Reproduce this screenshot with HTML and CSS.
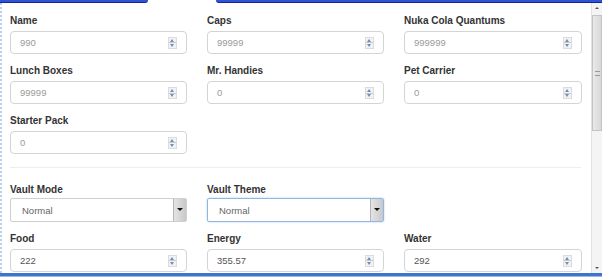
FILE: index.html
```html
<!DOCTYPE html>
<html lang="en">
<head>
  <meta charset="UTF-8">
  <title>Vault Editor</title>
  <link rel="stylesheet" href="styles.css">
</head>
<body>
  <div class="window">
    <div class="top-edge">
      <div class="tab-edge tab-left"></div>
      <div class="tab-gap"></div>
      <div class="tab-edge tab-right"></div>
    </div>

    <div class="panel">
      <div class="content">
        <div class="field-grid">
          <div class="field">
            <label>Name</label>
            <div class="num-input"><span>990</span><i class="spin"></i></div>
          </div>
          <div class="field">
            <label>Caps</label>
            <div class="num-input"><span>99999</span><i class="spin"></i></div>
          </div>
          <div class="field">
            <label>Nuka Cola Quantums</label>
            <div class="num-input"><span>999999</span><i class="spin"></i></div>
          </div>

          <div class="field">
            <label>Lunch Boxes</label>
            <div class="num-input"><span>99999</span><i class="spin"></i></div>
          </div>
          <div class="field">
            <label>Mr. Handies</label>
            <div class="num-input"><span>0</span><i class="spin"></i></div>
          </div>
          <div class="field">
            <label>Pet Carrier</label>
            <div class="num-input"><span>0</span><i class="spin"></i></div>
          </div>

          <div class="field">
            <label>Starter Pack</label>
            <div class="num-input"><span>0</span><i class="spin"></i></div>
          </div>
        </div>

        <hr class="divider">

        <div class="field-grid">
          <div class="field">
            <label>Vault Mode</label>
            <div class="select-box"><span>Normal</span><b class="drop"></b></div>
          </div>
          <div class="field">
            <label>Vault Theme</label>
            <div class="select-box focused"><span>Normal</span><b class="drop"></b></div>
          </div>
          <div class="field"></div>

          <div class="field">
            <label>Food</label>
            <div class="num-input dark"><span>222</span><i class="spin"></i></div>
          </div>
          <div class="field">
            <label>Energy</label>
            <div class="num-input dark"><span>355.57</span><i class="spin"></i></div>
          </div>
          <div class="field">
            <label>Water</label>
            <div class="num-input dark"><span>292</span><i class="spin"></i></div>
          </div>
        </div>
      </div>

      <div class="scrollbar">
        <div class="arrow arrow-up"></div>
        <div class="track">
          <div class="thumb"><div class="grip"></div></div>
        </div>
        <div class="arrow arrow-down"></div>
      </div>
    </div>

    <div class="bottom-edge"></div>
  </div>
</body>
</html>
```

FILE: styles.css
```css
html, body {
  margin: 0;
  padding: 0;
  background: #fff;
}
body {
  width: 602px;
  height: 277px;
  overflow: hidden;
  font-family: "Liberation Sans", Arial, sans-serif;
}
.window {
  display: flex;
  flex-direction: column;
  height: 277px;
}

/* top edge of the tab strip */
.top-edge {
  display: flex;
  height: 3px;
  flex: none;
}
.tab-edge {
  background: #2f52d6;
  border-bottom: 1px solid #17248f;
  box-sizing: border-box;
}
.tab-left {
  width: 148px;
  border-bottom-right-radius: 3px;
}
.tab-gap {
  width: 68px;
  background: #fff;
}
.tab-right {
  flex: 1;
  border-bottom-left-radius: 3px;
}

.panel {
  flex: 1;
  display: flex;
  overflow: hidden;
  border-left: 2px dotted #b9cdec;
}
.content {
  flex: 1;
  padding: 11px 0 0 8px;
  overflow: hidden;
}

.field-grid {
  display: grid;
  grid-template-columns: 177px 177px 178px;
  column-gap: 20px;
}
.field {
  margin-bottom: 10px;
}
.field label {
  display: block;
  height: 14px;
  line-height: 14px;
  font-size: 10px;
  font-weight: bold;
  color: #333;
  margin-bottom: 3px;
}

.num-input {
  display: flex;
  align-items: center;
  justify-content: space-between;
  height: 23px;
  box-sizing: border-box;
  border: 1px solid #d4d4d4;
  border-radius: 4px;
  padding: 0 9px 0 9px;
  font-size: 9.5px;
  color: #9a9a9a;
}
.num-input.dark {
  color: #555;
}
.spin {
  width: 9px;
  height: 12px;
  box-sizing: border-box;
  border: 1px solid #dcdcdc;
  background:
    linear-gradient(to bottom, transparent 45%, #c9c9c9 45%, #c9c9c9 55%, transparent 55%),
    #f2f2f2;
  position: relative;
}
.spin::before,
.spin::after {
  content: "";
  position: absolute;
  left: 1px;
  border-left: 2.5px solid transparent;
  border-right: 2.5px solid transparent;
}
.spin::before {
  top: 1px;
  border-bottom: 3px solid #6d8fc4;
}
.spin::after {
  bottom: 1px;
  border-top: 3px solid #6d8fc4;
}

.divider {
  border: 0;
  border-top: 1px solid #eee;
  margin: 3px 10px 15px 0;
}

.select-box {
  display: flex;
  align-items: center;
  justify-content: space-between;
  height: 24px;
  box-sizing: border-box;
  border: 1px solid #cfcfcf;
  border-radius: 2px;
  padding-left: 11px;
  font-size: 9.5px;
  color: #666;
  margin-top: -2px;
}
.select-box.focused {
  border-color: #8fb6e6;
  box-shadow: 0 0 2px #a9c8ef;
}
.drop {
  width: 12px;
  height: 22px;
  border-left: 1px solid #b5b5b5;
  background: linear-gradient(to right, #e4e4e4, #c8c8c8);
  position: relative;
}
.drop::after {
  content: "";
  position: absolute;
  left: 3px;
  top: 9px;
  border-left: 3px solid transparent;
  border-right: 3px solid transparent;
  border-top: 3px solid #111;
}

/* scrollbar */
.scrollbar {
  width: 10px;
  display: flex;
  flex-direction: column;
  background: #f4f4f4;
  border-left: 1px solid #e2e2e2;
}
.arrow {
  height: 10px;
  position: relative;
}
.arrow::after {
  content: "";
  position: absolute;
  left: 3px;
  border-left: 2px solid transparent;
  border-right: 2px solid transparent;
}
.arrow-up::after {
  top: 4px;
  border-bottom: 2px solid #555;
}
.arrow-down::after {
  top: 4px;
  border-top: 2px solid #555;
}
.track {
  flex: 1;
  padding-top: 2px;
}
.thumb {
  height: 116px;
  box-sizing: border-box;
  border: 1px solid #c4c4c4;
  background: linear-gradient(to right, #e9e9e9, #d8d8d8);
  display: flex;
  align-items: center;
  justify-content: center;
}
.grip {
  width: 5px;
  height: 5px;
  border-top: 1px solid #999;
  border-bottom: 1px solid #999;
  box-sizing: border-box;
}

.bottom-edge {
  height: 3px;
  flex: none;
  background: #3f74cc;
  border-bottom: 1px solid #9db8e4;
}
```
